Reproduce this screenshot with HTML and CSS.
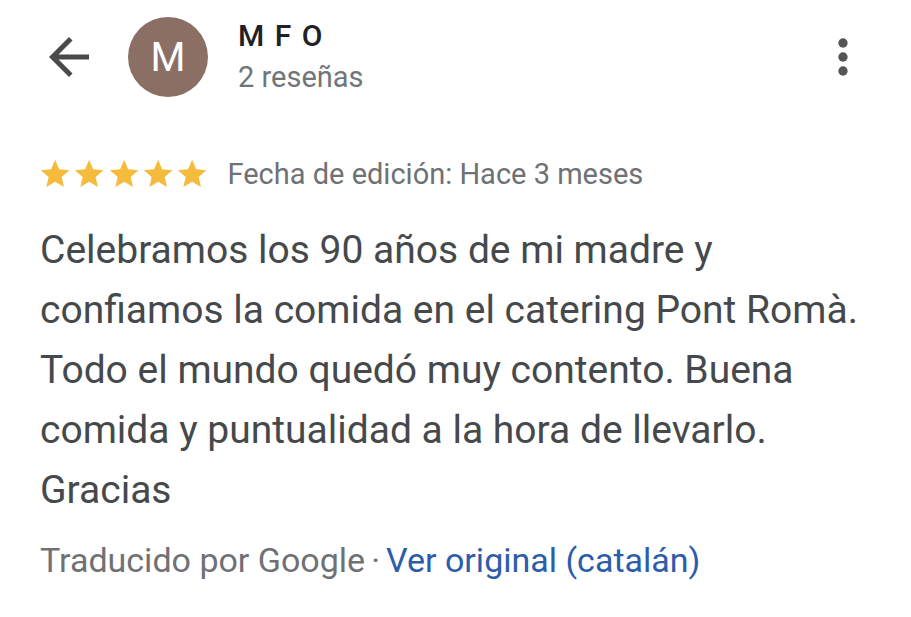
FILE: index.html
```html
<!DOCTYPE html>
<html lang="es">
<head>
<meta charset="utf-8">
<title>Reseña</title>
<link rel="stylesheet" href="styles.css">
</head>
<body>
<div class="page">
  <header class="top">
    <button class="icon-btn back" aria-label="Atrás">
      <svg viewBox="0 0 24 24" width="60" height="60"><path d="M20 11H7.83l5.59-5.59L12 4l-8 8 8 8 1.41-1.41L7.83 13H20v-2z"/></svg>
    </button>
    <div class="avatar">M</div>
    <div class="who">
      <div class="name">M F O</div>
      <div class="count">2 reseñas</div>
    </div>
    <button class="icon-btn more" aria-label="Más opciones">
      <svg viewBox="0 0 24 24" width="56" height="56"><circle cx="12" cy="6" r="2"/><circle cx="12" cy="12" r="2"/><circle cx="12" cy="18" r="2"/></svg>
    </button>
  </header>

  <div class="rating">
    <div class="stars">
      <svg class="star" viewBox="0 0 24 24"><path d="M12 17.27L18.18 21l-1.64-7.03L22 9.24l-7.19-.61L12 2 9.19 8.63 2 9.24l5.46 4.73L5.82 21z"/></svg>
      <svg class="star" viewBox="0 0 24 24"><path d="M12 17.27L18.18 21l-1.64-7.03L22 9.24l-7.19-.61L12 2 9.19 8.63 2 9.24l5.46 4.73L5.82 21z"/></svg>
      <svg class="star" viewBox="0 0 24 24"><path d="M12 17.27L18.18 21l-1.64-7.03L22 9.24l-7.19-.61L12 2 9.19 8.63 2 9.24l5.46 4.73L5.82 21z"/></svg>
      <svg class="star" viewBox="0 0 24 24"><path d="M12 17.27L18.18 21l-1.64-7.03L22 9.24l-7.19-.61L12 2 9.19 8.63 2 9.24l5.46 4.73L5.82 21z"/></svg>
      <svg class="star" viewBox="0 0 24 24"><path d="M12 17.27L18.18 21l-1.64-7.03L22 9.24l-7.19-.61L12 2 9.19 8.63 2 9.24l5.46 4.73L5.82 21z"/></svg>
    </div>
    <span class="date">Fecha de edición: Hace 3 meses</span>
  </div>

  <p class="review">Celebramos los 90 años de mi madre y confiamos la comida en el catering Pont Romà. Todo el mundo quedó muy contento. Buena comida y puntualidad a la hora de llevarlo. Gracias</p>

  <p class="translated">Traducido por Google<span class="dot">·</span><a class="original" href="#">Ver original (catalán)</a></p>
</div>
</body>
</html>
```

FILE: styles.css
```css
html, body {
  margin: 0;
  padding: 0;
  background: #ffffff;
}

body {
  font-family: Roboto, "Liberation Sans", sans-serif;
  width: 911px;
  height: 617px;
  overflow: hidden;
}

.page {
  padding: 0 40px;
}

.top {
  height: 114px;
  display: flex;
  align-items: center;
  margin: 0 -40px;
}

.icon-btn {
  border: 0;
  background: none;
  padding: 0;
  display: flex;
  fill: #4a4a4a;
}

.back {
  margin-left: 39px;
}

.avatar {
  margin-left: 29px;
  width: 80px;
  height: 80px;
  border-radius: 50%;
  background: #8b6f64;
  color: #ffffff;
  font-size: 40px;
  display: flex;
  align-items: center;
  justify-content: center;
}

.who {
  margin-left: 30px;
  flex: 1;
  margin-top: 2px;
}

.name {
  font-size: 30px;
  line-height: 32px;
  letter-spacing: 1.5px;
  font-weight: 500;
  color: #202124;
}

.count {
  margin-top: 6px;
  font-size: 29px;
  line-height: 38px;
  color: #70757a;
}

.more {
  margin-right: 40px;
  fill: #555555;
}

.rating {
  margin-top: 40px;
  height: 40px;
  display: flex;
  align-items: center;
}

.stars {
  display: flex;
  margin-left: -2px;
}

.star {
  width: 34.3px;
  height: 34.3px;
  fill: #f4bb3d;
}

.date {
  margin-left: 18px;
  font-size: 29px;
  color: #6f7175;
}

.review {
  margin: 26px 0 0;
  font-size: 39px;
  line-height: 60px;
  color: #46494c;
}

.translated {
  margin: 20px 0 0;
  font-size: 34px;
  line-height: 40px;
  color: #6f7175;
}

.dot {
  margin: 0 6px;
}

.original {
  color: #2d5cab;
  text-decoration: none;
}
```
